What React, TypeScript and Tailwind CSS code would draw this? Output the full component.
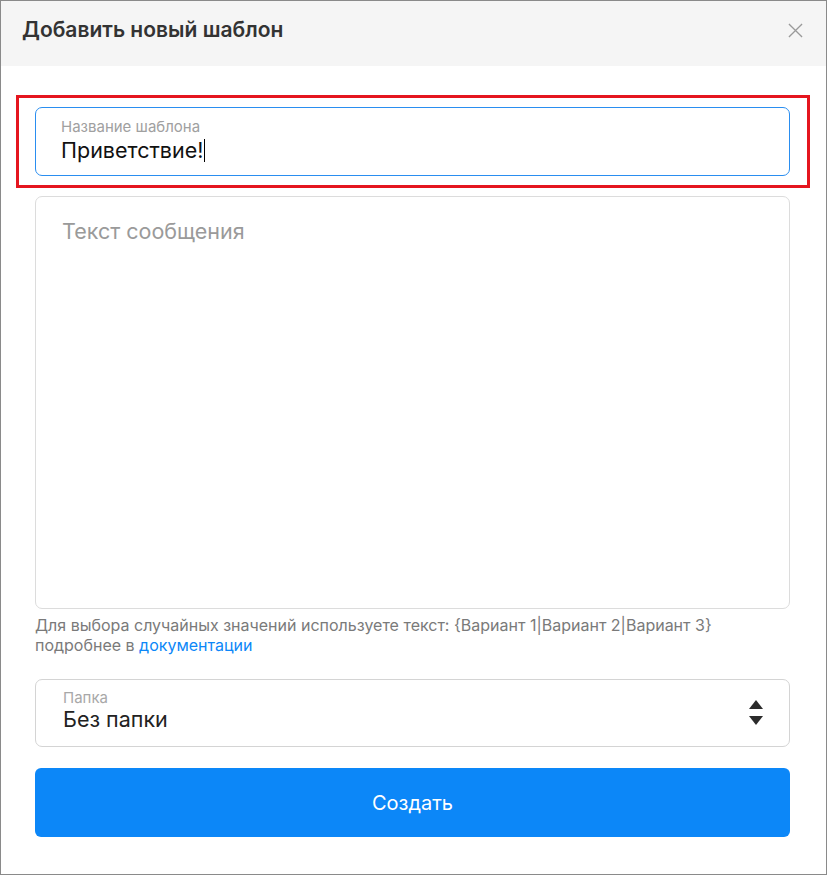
export default function App() {
  return (
    <div
      className="w-[827px] h-[875px] border border-[#8a8a8a] bg-white flex flex-col"
      style={{ fontFamily: 'Inter, Roboto, "Noto Sans", sans-serif' }}
    >
      {/* Header */}
      <div className="h-[65px] shrink-0 bg-[#f5f5f5] flex items-start justify-between pl-[21px] pr-[23px] pt-[17px]">
        <h2 className="text-[21px] leading-[24px] font-semibold text-[#333]">Добавить новый шаблон</h2>
        <button className="mt-[5px] w-[15px] h-[15px] text-[#9a9a9a]">
          <svg viewBox="0 0 16 16" className="w-[15px] h-[15px]" fill="none" stroke="currentColor" strokeWidth="1.4">
            <path d="M1 1 L15 15 M15 1 L1 15" />
          </svg>
        </button>
      </div>

      <div className="flex flex-col pl-[15px] pr-[16px] pt-[29px]">
        {/* Name input (highlighted) */}
        <div className="border-[3px] border-[#e5161f] pl-[16px] pr-[17px] py-[9px]">
          <div className="h-[69px] border border-[#2a8ef0] rounded-[7px] pl-[25px] pt-[10px] flex flex-col">
            <span className="text-[15px] leading-[17px] text-[#a0a0a0]">Название шаблона</span>
            <span className="text-[21.5px] leading-[30px] text-[#111] flex items-center">
              Приветствие!
              <span className="inline-block w-px h-[23px] bg-black ml-[1px]" />
            </span>
          </div>
        </div>

        <div className="pl-[19px] pr-[20px] flex flex-col">
          {/* Message textarea */}
          <div className="mt-[8px] h-[413px] border border-[#dcdcdc] rounded-[7px] pl-[26px] pt-[18px]">
            <span className="text-[21.5px] text-[#9a9a9a]">Текст сообщения</span>
          </div>

          {/* Hint */}
          <p className="mt-[6px] text-[16px] leading-[20px] text-[#7a7a7a]">
            Для выбора случайных значений используете текст: {'{'}Вариант 1|Вариант 2|Вариант 3{'}'}
            <br />
            подробнее в <a className="text-[#0c87f8]">документации</a>
          </p>

          {/* Folder select */}
          <div className="mt-[24px] h-[68px] border border-[#d4d4d4] rounded-[7px] pl-[27px] pr-[26px] pb-[4px] flex items-center justify-between">
            <div className="flex flex-col">
              <span className="text-[15px] leading-[17px] text-[#a8a8a8]">Папка</span>
              <span className="text-[21.5px] leading-[27px] text-[#222]">Без папки</span>
            </div>
            <svg viewBox="0 0 14 26" className="w-[14px] h-[26px] mt-[4px]" fill="#2b2b2b">
              <path d="M7 0 L14 9 L0 9 Z" />
              <path d="M0 16 L14 16 L7 25 Z" />
            </svg>
          </div>

          {/* Submit */}
          <button className="mt-[21px] h-[69px] rounded-[6px] bg-[#0c87f8] text-white text-[20px]">Создать</button>
        </div>
      </div>
    </div>
  );
}
